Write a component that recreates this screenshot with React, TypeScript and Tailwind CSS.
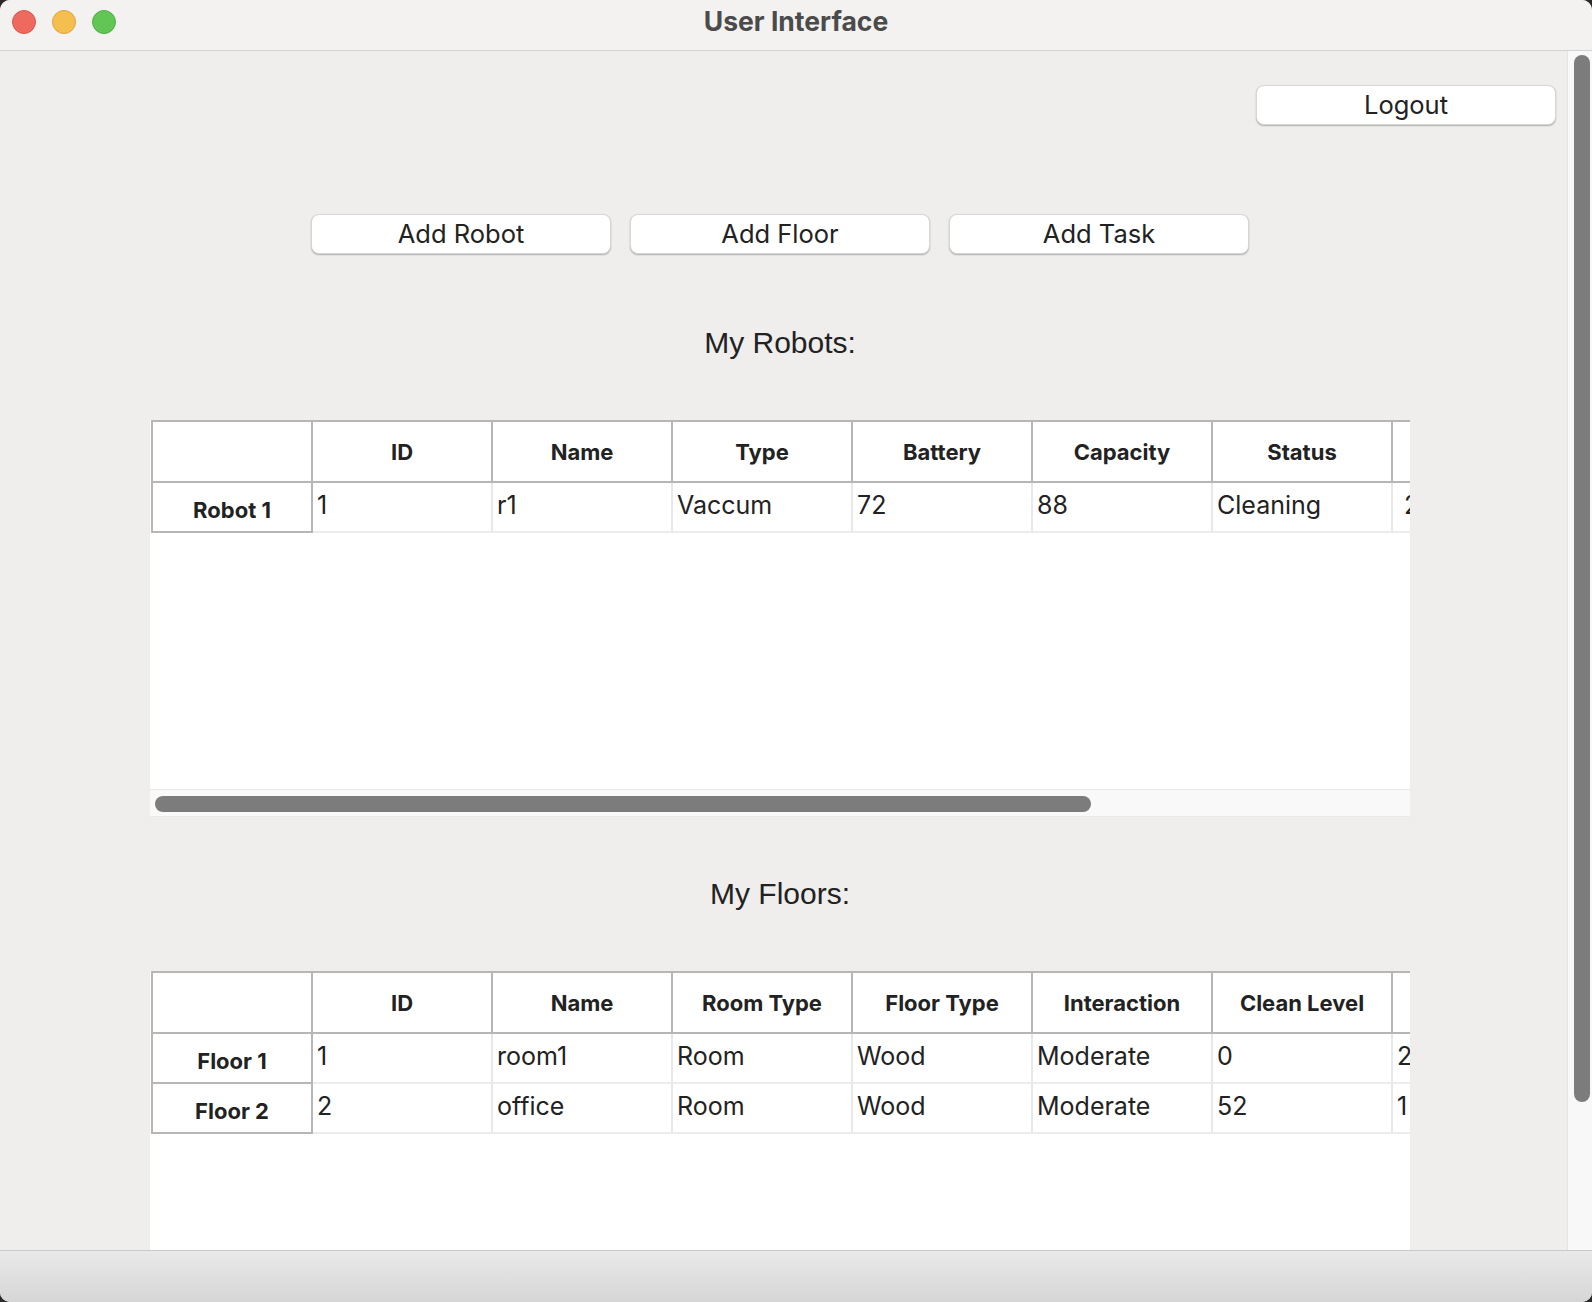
import React from 'react';

interface TableProps {
  columns: string[];
  rows: { label: string; cells: string[] }[];
  height: string;
  scrollbar?: boolean;
}

const DataTable = ({ columns, rows, height, scrollbar }: TableProps) => {
  return (
    <div className="w-[1260px] flex flex-col">
      <div className={`bg-white overflow-hidden pl-[1px] ${height}`}>
        <div className="flex w-max">
          <div className="w-[162px] h-[63px] shrink-0 border-2 border-[#b6b6b6]" />
          {columns.map((col) => (
            <div
              key={col}
              className="w-[180px] h-[63px] shrink-0 border-t-2 border-b-2 border-r-2 border-[#b6b6b6] flex items-center justify-center pt-[2px] text-[22px] font-bold text-[#222]"
            >
              {col}
            </div>
          ))}
        </div>
        {rows.map((row) => (
          <div key={row.label} className="flex w-max">
            <div className="w-[162px] h-[50px] shrink-0 border-l-2 border-b-2 border-r-2 border-[#b6b6b6] flex items-center justify-center pt-[6px] text-[22px] font-bold text-[#222]">
              {row.label}
            </div>
            {row.cells.map((cell, i) => (
              <div
                key={i}
                className="w-[180px] h-[50px] shrink-0 whitespace-pre border-r-2 border-r-[#e8e8e8] border-b-2 border-b-[#ececec] pl-[4px] pt-[7px] text-[25px] leading-[30px] text-[#222]"
              >
                {cell}
              </div>
            ))}
          </div>
        ))}
      </div>
      {scrollbar && (
        <div className="h-[28px] bg-[#f9f9f9] border-t border-[#e6e6e6] border-b border-b-[#e8e8e8] pt-[6px] pl-[5px]">
          <div className="w-[936px] h-[16px] rounded-full bg-[#7c7c7c]" />
        </div>
      )}
    </div>
  );
};

const MacButton = ({ label }: { label: string }) => (
  <button className="w-[300px] h-[40px] bg-white rounded-[8px] border-[0.5px] border-[#d6d6d6] shadow-[0_1px_1.5px_rgba(0,0,0,0.28)] text-[25.5px] text-[#222] flex items-center justify-center">
    {label}
  </button>
);

const App = () => {
  const robotCols = ['ID', 'Name', 'Type', 'Battery', 'Capacity', 'Status', 'Floor ID'];
  const robotRows = [{ label: 'Robot 1', cells: ['1', 'r1', 'Vaccum', '72', '88', 'Cleaning', '\u00a02'] }];

  const floorCols = ['ID', 'Name', 'Room Type', 'Floor Type', 'Interaction', 'Clean Level', 'Size'];
  const floorRows = [
    { label: 'Floor 1', cells: ['1', 'room1', 'Room', 'Wood', 'Moderate', '0', '2'] },
    { label: 'Floor 2', cells: ['2', 'office', 'Room', 'Wood', 'Moderate', '52', '1'] },
  ];

  return (
    <div className="w-[1592px] h-[1302px] bg-[#2a2a2a] font-['Inter',sans-serif]">
      <div className="w-full h-full rounded-[10px] overflow-hidden flex flex-col bg-[#efeeec]">
        {/* title bar */}
        <div className="h-[51px] shrink-0 bg-[#f3f2f0] border-b border-[#d2d2d2] grid grid-cols-[1fr_auto_1fr]">
          <div className="flex items-start gap-[16px] pl-[12px] pt-[10px]">
            <span className="w-[24px] h-[24px] rounded-full bg-[#ee6a5f] border border-[#d7584d]" />
            <span className="w-[24px] h-[24px] rounded-full bg-[#f5bf4f] border border-[#d9a43f]" />
            <span className="w-[24px] h-[24px] rounded-full bg-[#62c655] border border-[#50ad45]" />
          </div>
          <div className="pt-[5px] text-[26.5px] leading-[32px] font-bold text-[#4b4b4b]">User Interface</div>
          <div />
        </div>

        {/* content */}
        <div className="flex-1 flex overflow-hidden">
          <div className="flex-1 flex flex-col overflow-hidden">
            <div className="flex justify-end pt-[34px] pr-[11px]">
              <MacButton label="Logout" />
            </div>
            <div className="ml-[150px] w-[1260px] flex flex-col items-center">
              <div className="mt-[89px] flex gap-[19px]">
                <MacButton label="Add Robot" />
                <MacButton label="Add Floor" />
                <MacButton label="Add Task" />
              </div>
              <h2 className="mt-[71px] h-[36px] text-[30px] leading-[36px] text-[#222] font-['Liberation_Sans',Arial,sans-serif]">
                My Robots:
              </h2>
              <div className="mt-[59px]">
                <DataTable columns={robotCols} rows={robotRows} height="h-[369px]" scrollbar />
              </div>
              <h2 className="mt-[59px] h-[36px] text-[30px] leading-[36px] text-[#222] font-['Liberation_Sans',Arial,sans-serif]">
                My Floors:
              </h2>
              <div className="mt-[59px]">
                <DataTable columns={floorCols} rows={floorRows} height="h-[400px]" />
              </div>
            </div>
          </div>

          {/* vertical scrollbar */}
          <div className="w-[25px] shrink-0 bg-[#f8f8f8] border-l border-[#e3e3e3] pt-[4px] pl-[6px]">
            <div className="w-[16px] h-[1047px] rounded-full bg-[#7c7c7c]" />
          </div>
        </div>

        {/* footer */}
        <div className="h-[52px] shrink-0 border-t border-[#c9c9c9] bg-gradient-to-b from-[#e9e9e9] to-[#d6d6d6]" />
      </div>
    </div>
  );
};

export default App;
